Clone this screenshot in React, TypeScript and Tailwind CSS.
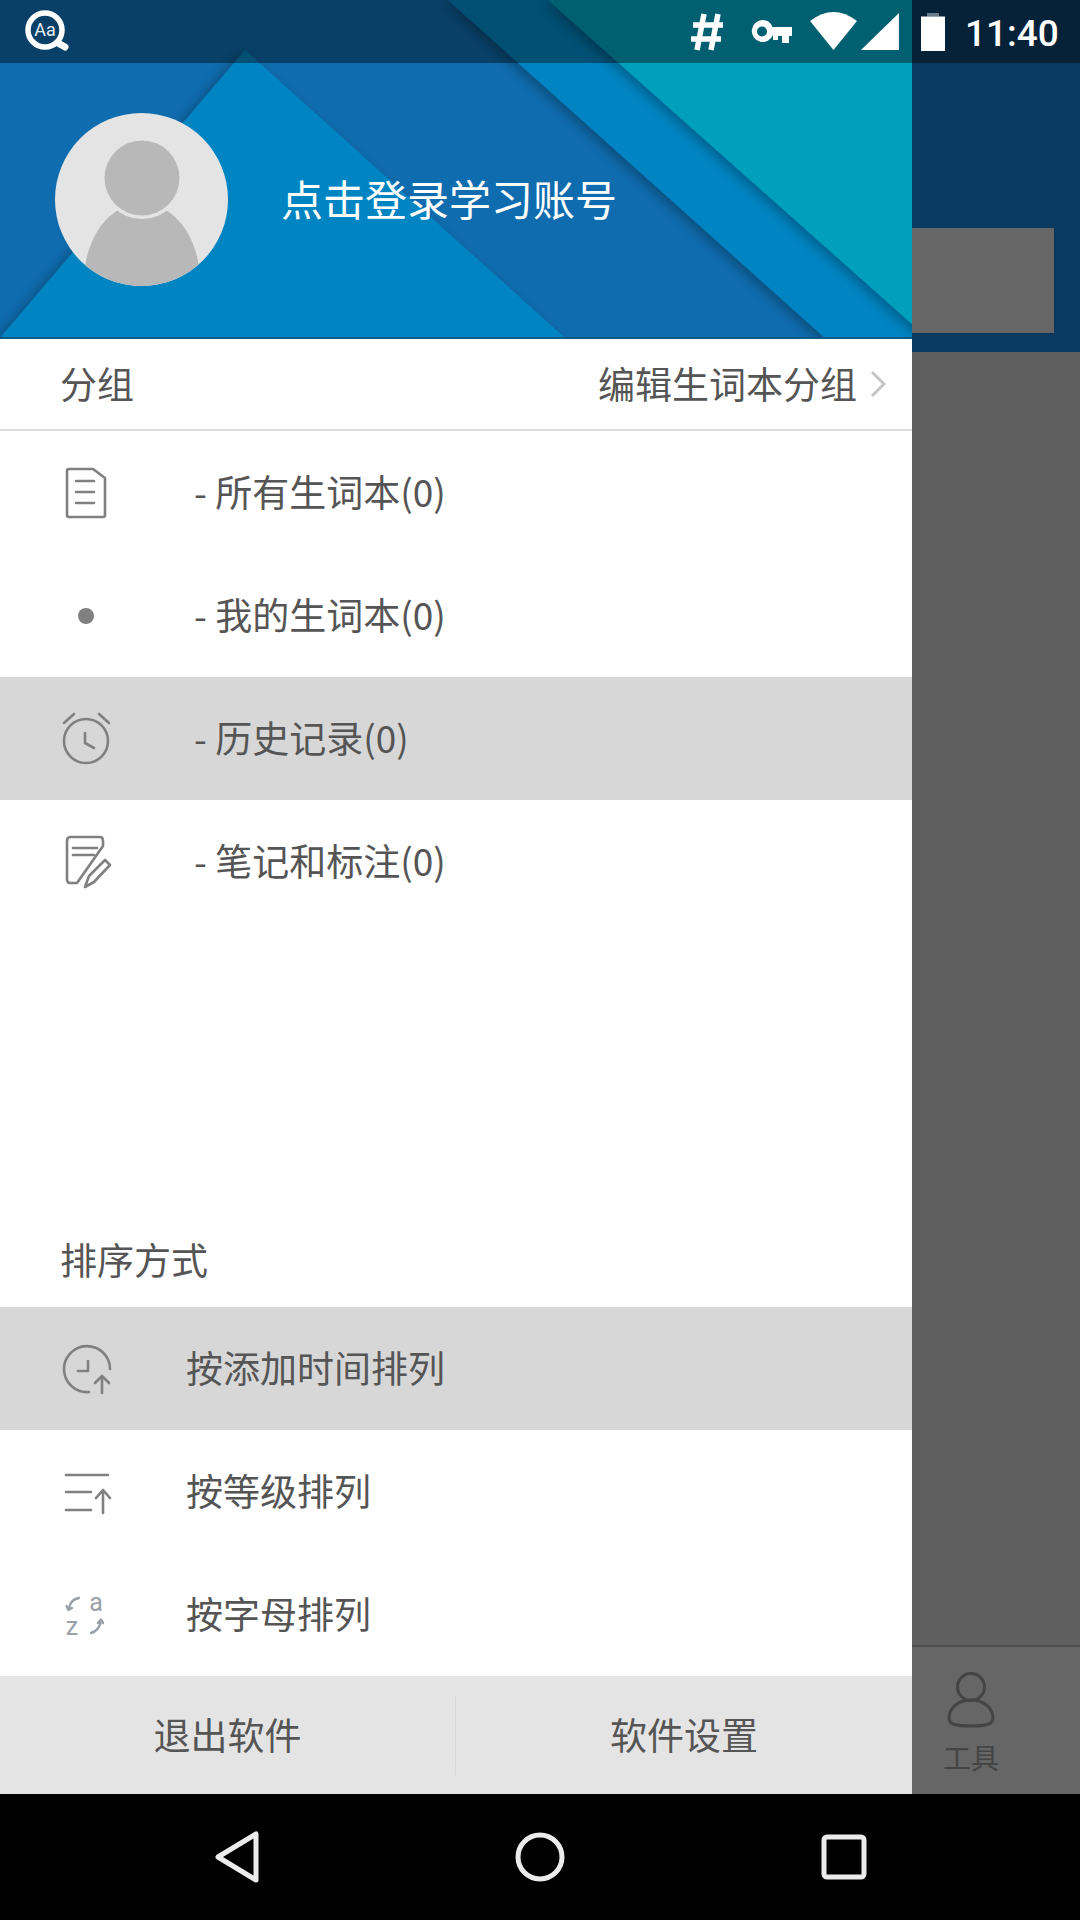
import React from "react";

const FONT = '"Noto Sans CJK SC", "Noto Sans", sans-serif';
const S = { fill: "none", stroke: "#808080", strokeWidth: 2.6, strokeLinecap: "round" as const, strokeLinejoin: "round" as const };

function Banner() {
  return (
    <svg className="absolute inset-0" width="912" height="339" viewBox="0 0 912 339">
      <defs>
        <filter id="sh" x="-20%" y="-20%" width="140%" height="140%">
          <feDropShadow dx="-5" dy="3" stdDeviation="6" floodColor="#000" floodOpacity="0.28" />
        </filter>
      </defs>
      <rect width="912" height="339" fill="#0f6cae" />
      <polygon points="245,50 565,338 0,338" fill="#0085c2" filter="url(#sh)" />
      <polygon points="448,0 825,338 1000,338 1000,0" fill="#0085c2" filter="url(#sh)" />
      <polygon points="548,0 912,324 1000,400 1000,0" fill="#00a0bd" filter="url(#sh)" />
      <rect y="337" width="912" height="2" fill="#0a5a85" />
    </svg>
  );
}

function Avatar() {
  return (
    <svg width="173" height="173" viewBox="0 0 173 173" className="shrink-0">
      <defs>
        <clipPath id="av"><circle cx="86.5" cy="86.5" r="86.5" /></clipPath>
      </defs>
      <circle cx="86.5" cy="86.5" r="86.5" fill="#e4e4e4" />
      <g clipPath="url(#av)">
        <ellipse cx="87" cy="168" rx="58" ry="78" fill="#b8b8b8" />
        <circle cx="87" cy="65" r="41" fill="#e4e4e4" />
        <circle cx="87" cy="65" r="37.5" fill="#b8b8b8" />
      </g>
    </svg>
  );
}

function StatusBar() {
  return (
    <div className="absolute inset-x-0 top-0 h-[63px] bg-black/40 flex items-center">
      <svg width="60" height="63" viewBox="0 0 60 63" className="ml-[18px]">
        <circle cx="27" cy="30" r="17" fill="none" stroke="#fff" strokeWidth="5.5" />
        <path d="M40 43 L47 47" stroke="#fff" strokeWidth="7" strokeLinecap="round" />
        <text x="27" y="36" textAnchor="middle" fontFamily="Roboto, sans-serif" fontSize="18" fill="#e6eef4">Aa</text>
      </svg>
      <svg width="36" height="40" viewBox="0 0 36 40" className="ml-[611px]">
        <path d="M15 2 L8 38 M29 2 L22 38 M4 13 H34 M2 27 H32" stroke="#fff" strokeWidth="5.5" fill="none" />
      </svg>
      <svg width="42" height="24" viewBox="0 0 42 24" className="ml-[26px]">
        <path fillRule="evenodd" d="M11 0 A11 11 0 0 1 21.5 7 H41 V16 H38 V23 H31 V16 H27 V20 H22 V15 A11 11 0 1 1 11 0 Z M11 6.5 A5 5 0 1 0 11 16.5 A5 5 0 1 0 11 6.5 Z" fill="#fff" />
      </svg>
      <svg width="47" height="38" viewBox="0 0 47 38" className="ml-[17px] mt-[-1px]">
        <path d="M23.5 38 L0 9 Q23.5 -9 47 9 Z" fill="#fff" />
      </svg>
      <svg width="38" height="37" viewBox="0 0 38 37" className="ml-[4px]">
        <path d="M38 0 V37 H0 Z" fill="#fff" />
      </svg>
      <svg width="24" height="38" viewBox="0 0 24 38" className="ml-[22px]">
        <rect x="6" width="12" height="3.5" fill="#fff" opacity="0.4" />
        <rect y="3.5" width="24" height="34.5" fill="#fff" />
      </svg>
      <span className="ml-[20px] mt-[3px] text-[37px] font-medium text-white leading-none" style={{ fontFamily: "Roboto, sans-serif" }}>11:40</span>
    </div>
  );
}

function Row({ icon, label, active, textMl }: { icon: React.ReactNode; label: string; active?: boolean; textMl: string }) {
  return (
    <div className={`h-[123px] flex items-center pl-[56px] ${active ? "bg-[#d7d7d7]" : ""}`}>
      <svg width="60" height="60" viewBox="0 0 60 60" className="shrink-0">{icon}</svg>
      <span className={`${textMl} mb-[2px] text-[37px] text-[#555555] leading-none whitespace-nowrap`}>{label}</span>
    </div>
  );
}

const DocIcon = (
  <g {...S}>
    <path d="M13 6 H37 L49 15 V52 Q49 54 47 54 H13 Q11 54 11 52 V8 Q11 6 13 6 Z" />
    <path d="M20 18 H38 M20 29 H38 M20 40 H38" />
  </g>
);
const DotIcon = <circle cx="30" cy="30" r="8" fill="#808080" />;
const ClockIcon = (
  <g {...S}>
    <circle cx="30" cy="32" r="22" />
    <path d="M29 24 V34 L38 39 M8 14 L18 5 M43 5 L53 14" />
  </g>
);
const NoteIcon = (
  <g {...S}>
    <path d="M21 51 H14 Q11 51 11 47 V9 Q11 5 14 5 H44 Q47 5 47 9 V14 L21 51" />
    <path d="M17 16 H41 M17 23 H38" />
    <path d="M29 55 L33 44 L49 28 L54 33 L38 50 Z" />
  </g>
);
const SortTimeIcon = (
  <g {...S}>
    <path d="M54 30 A23 23 0 1 0 33 53" />
    <path d="M32 22 V32 H22 M46 37 V54 M39 44 L46 37 L53 44" />
  </g>
);
const SortLevelIcon = (
  <g {...S}>
    <path d="M10 13 H52 M10 30 H35 M10 48 H35 M47 28 V51 M40 36 L47 28 L54 36" />
  </g>
);
const SortAzIcon = (
  <g>
    <g fill="none" stroke="#9aa0a8" strokeWidth="2.4" strokeLinecap="round" strokeLinejoin="round">
      <path d="M23 13 Q15 14 13 23 M10.5 21 L12.5 25 L16 23" />
      <path d="M35 48 Q43 46 45 36 M42 38 L45 34.5 L47 38" />
    </g>
    <text x="40" y="26" textAnchor="middle" fontFamily="Roboto, sans-serif" fontSize="25" fill="#9aa0a8">a</text>
    <text x="16" y="50" textAnchor="middle" fontFamily="Roboto, sans-serif" fontSize="25" fill="#9aa0a8">z</text>
  </g>
);

export default function App() {
  return (
    <div className="relative w-[1080px] h-[1920px] flex flex-col bg-black overflow-hidden" style={{ fontFamily: FONT }}>
      <div className="h-[1794px] flex">
        <div className="w-[912px] shrink-0 bg-white flex flex-col">
          <div className="relative h-[339px] shrink-0 pl-[55px] pt-[113px]">
            <Banner />
            <div className="relative flex items-start">
              <Avatar />
              <span className="ml-[53px] mt-[64px] text-[42px] leading-none text-white whitespace-nowrap">点击登录学习账号</span>
            </div>
          </div>
          <div className="h-[92px] shrink-0 border-b-2 border-[#dcdcdc] flex items-center pl-[60px] pr-[26px] text-[37px] leading-none text-[#555555]">
            <span className="mb-[2px]">分组</span>
            <span className="ml-auto mb-[2px]">编辑生词本分组</span>
            <svg width="16" height="28" viewBox="0 0 16 28" className="ml-[13px]">
              <path d="M2 2 L14 14 L2 26" fill="none" stroke="#c4c4c4" strokeWidth="3" />
            </svg>
          </div>
          <Row icon={DocIcon} label="- 所有生词本(0)" textMl="ml-[78px]" />
          <Row icon={DotIcon} label="- 我的生词本(0)" textMl="ml-[78px]" />
          <Row icon={ClockIcon} label="- 历史记录(0)" active textMl="ml-[78px]" />
          <Row icon={NoteIcon} label="- 笔记和标注(0)" textMl="ml-[78px]" />
          <div className="flex-1 flex items-end pl-[60px] pb-[29px]">
            <span className="text-[37px] leading-none text-[#555555]">排序方式</span>
          </div>
          <Row icon={SortTimeIcon} label="按添加时间排列" active textMl="ml-[70px]" />
          <Row icon={SortLevelIcon} label="按等级排列" textMl="ml-[70px]" />
          <Row icon={SortAzIcon} label="按字母排列" textMl="ml-[70px]" />
          <div className="h-[118px] shrink-0 bg-[#e4e4e4] flex items-center text-[37px] leading-none text-[#555555]">
            <div className="w-[455px] text-center mb-[2px]">退出软件</div>
            <div className="w-px h-[80px] bg-[#d8d8d8]" />
            <div className="flex-1 text-center mb-[2px]">软件设置</div>
          </div>
        </div>
        <div className="flex-1 flex flex-col">
          <div className="h-[352px] shrink-0 bg-[#0a3a60] pt-[228px]">
            <div className="w-[142px] h-[105px] bg-[#666666]" />
          </div>
          <div className="h-[1295px] shrink-0 bg-[#5f5f5f] border-b-2 border-[#4e4e4e]" />
          <div className="flex-1 bg-[#666666]">
            <div className="w-[118px] flex flex-col items-center">
              <svg width="48" height="56" viewBox="0 0 48 56" className="mt-[25px]">
                <g fill="none" stroke="#444444" strokeWidth="3">
                  <circle cx="24" cy="15" r="13.5" />
                  <path d="M24 28 C9 28 2 38 2 46 C2 52 8 54 24 54 C40 54 46 52 46 46 C46 38 39 28 24 28 Z" />
                </g>
              </svg>
              <span className="mt-[15px] text-[28px] leading-none text-[#444444]">工具</span>
            </div>
          </div>
        </div>
      </div>
      <div className="h-[126px] shrink-0 bg-black flex items-center pl-[213px]">
        <svg width="48" height="54" viewBox="0 0 48 54">
          <path d="M43 4 V50 L5 27 Z" fill="none" stroke="#ececec" strokeWidth="5" strokeLinejoin="round" />
        </svg>
        <svg width="54" height="54" viewBox="0 0 54 54" className="ml-[252px]">
          <circle cx="27" cy="27" r="22" fill="none" stroke="#ececec" strokeWidth="5" />
        </svg>
        <svg width="46" height="46" viewBox="0 0 46 46" className="ml-[254px]">
          <rect x="3" y="3" width="40" height="40" rx="3" fill="none" stroke="#ececec" strokeWidth="5" />
        </svg>
      </div>
      <StatusBar />
    </div>
  );
}
